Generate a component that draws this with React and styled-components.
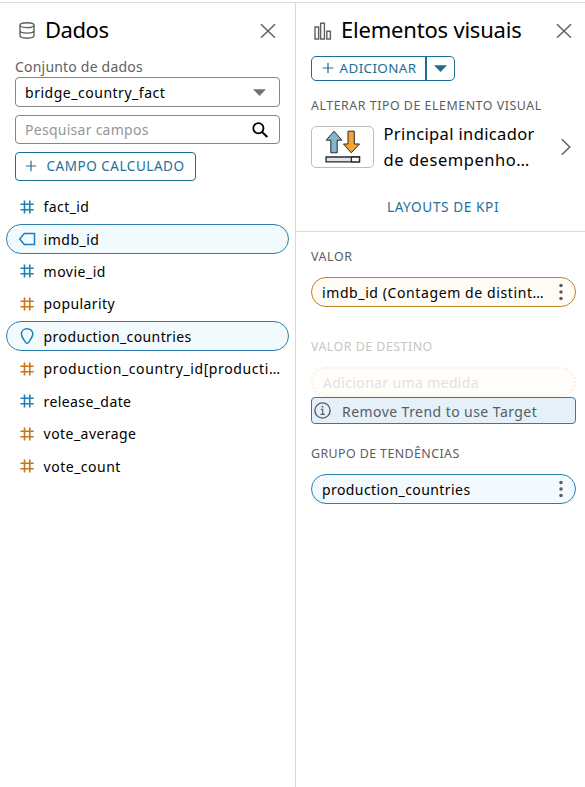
import React from "react";
import styled, { createGlobalStyle } from "styled-components";

const Global = createGlobalStyle`
  * { box-sizing: border-box; }
  body { margin: 0; background: #fff; font-family: "Noto Sans", "Open Sans", sans-serif; color: #000; }
  svg { display: block; flex: none; }
  button, input { font: inherit; color: inherit; }
`;

const Page = styled.div`
  width: 585px; height: 787px; padding-top: 2px; overflow: hidden;
`;
const Columns = styled.div`
  display: grid; grid-template-columns: 296px 289px; height: 785px;
  border-top: 1px solid #dcdcdc;
`;
const DataPanel = styled.section`
  border-right: 1px solid #d9d9d9; padding: 0 15px; min-width: 0;
`;
const VisualPanel = styled.section`min-width: 0;`;
const Text = styled.span`
  font-size: ${(p) => p.$size || 14}px;
  letter-spacing: ${(p) => p.$ls || 0}px;
  white-space: nowrap;
`;
const PanelHeader = styled.header`
  display: flex; align-items: center; height: 55px;
  padding: ${(p) => p.$pad};
`;
const Title = styled.h1`
  margin: 0 auto 0 ${(p) => p.$gap}px; font-weight: 400; font-size: 22px; line-height: 30px;
  letter-spacing: ${(p) => p.$ls}px; white-space: nowrap; padding-bottom: 3px;
`;
const IconButton = styled.button`
  display: flex; border: 0; padding: 0; background: none;
`;
const FieldCaption = styled.label`
  display: block; height: 19px; line-height: 18px; color: #626262; white-space: nowrap;
  font-size: 14px; letter-spacing: ${(p) => p.$ls}px;
`;
const Box = styled.div`
  display: flex; align-items: center; justify-content: space-between;
  width: 265px; height: ${(p) => p.$h}px; margin-bottom: ${(p) => p.$mb}px;
  border: 1px solid #858585; border-radius: 4px; padding: 0 ${(p) => p.$right}px 0 9px;
`;
const SearchInput = styled.input`
  width: 200px; border: 0; padding: 0; outline: 0; background: none; font-size: 14px;
  letter-spacing: ${(p) => p.$ls}px;
  &::placeholder { color: #969696; opacity: 1; }
`;
const OutlineButton = styled.button`
  display: flex; align-items: center; gap: 9.5px; width: 181px; height: 29px;
  border: 1px solid #1d6d92; border-radius: 4px; background: #fff; color: #24709a;
  padding: 0 0 1px 9px;
`;
const FieldList = styled.ul`
  list-style: none; margin: 10.6px -9px 0; padding: 0; width: 283px;
`;
const FieldRow = styled.li`
  display: flex; align-items: center; gap: 7.6px; height: 30px; margin-bottom: 2.45px;
  padding: 0 0 0 11px; border: 1px solid ${(p) => (p.$on ? "#2a7fae" : "transparent")};
  border-radius: 15px; background: ${(p) => (p.$on ? "#f2fafe" : "transparent")};
  color: ${(p) => (p.$measure ? "#c77717" : "#1f80b8")};
`;
const FieldName = styled(Text)`
  color: #000; line-height: 20px; padding-top: 1px;
`;
const Inset = styled.div`padding-left: 15px; width: 280px;`;
const SplitButton = styled.div`
  display: flex; width: 144px; height: 25px; margin-top: -2px; border: 1px solid #1d6d92; border-radius: 5px;
  color: #1d6d92;
`;
const SplitMain = styled.button`
  display: flex; align-items: center; gap: 5.5px; width: 115px; border: 0;
  border-right: 2px solid #1d6d92; background: none; padding: 0 0 1px 10px;
`;
const SplitArrow = styled.button`
  display: flex; align-items: center; justify-content: center; flex: 1; border: 0; padding: 0; background: none;
`;
const SectionLabel = styled.div`
  height: 18px; line-height: 18px; margin-top: ${(p) => p.$mt}px; margin-bottom: ${(p) => p.$mb}px;
  font-size: 12.4px; letter-spacing: ${(p) => p.$ls}px; white-space: nowrap;
  color: ${(p) => (p.$muted ? "#c6c6c6" : "#5d5d5d")};
`;
const TypePicker = styled.div`
  display: flex; align-items: center; height: 52px;
`;
const Thumb = styled.div`
  display: flex; align-items: center; justify-content: center; width: 63px; height: 42px; flex: none;
  border: 1px solid #bdbdbd; border-radius: 5px;
`;
const TypeName = styled.div`
  display: flex; flex-direction: column; margin-left: 9.5px; width: 177px; line-height: 26px;
`;
const LayoutLink = styled.div`
  display: flex; justify-content: center; align-items: center; height: 48px; margin-top: 11px;
  padding: 0 0 3px 5px; color: #24709a; border-bottom: 1px solid #dadada;
`;
const Pill = styled.div`
  display: flex; align-items: center; justify-content: space-between; width: 265px; height: 30px;
  border: 1px solid ${(p) => (p.$measure ? "#bd8228" : "#2a7fae")}; border-radius: 15px;
  background: ${(p) => (p.$measure ? "#fffcf6" : "#f3fafd")}; padding: 0 12px 0 10px;
`;
const EmptyPill = styled.div`
  display: flex; align-items: center; width: 265px; height: 30px; padding-left: 10px;
  border: 2px dotted #f9efe2; border-radius: 15px; background: #fffefb; color: #e2e2e2;
`;
const Notice = styled.div`
  display: flex; align-items: center; gap: 11.5px; width: 265px; height: 27px; padding-left: 1.5px;
  border: 1px solid #2a7cae; border-radius: 4px; background: #e5f0f9; color: #565d63;
`;
const NoticeText = styled(Text)`padding-top: 2px;`;
const NoticeIcon = styled.span`padding-bottom: 1px;`;

const Close = () => (
  <svg width="16" height="16" viewBox="0 0 16 16" stroke="#606060" strokeWidth="1.5"><path d="M1 1.2 15 14.8M15 1.2 1 14.8" /></svg>
);
const Plus = () => (
  <svg width="12" height="12" viewBox="0 0 12 12" stroke="currentColor" strokeWidth="1.2"><path d="M6 .8V11.2M.8 6H11.2" /></svg>
);
const Caret = ({ color }) => (
  <svg width="13" height="7" viewBox="0 0 13 7"><path d="M0 .2H13L6.5 7Z" fill={color} /></svg>
);
const Database = () => (
  <svg width="16" height="17" viewBox="0 0 16 17" fill="none" stroke="#606060" strokeWidth="1.4">
    <ellipse cx="8" cy="3.2" rx="7" ry="2.4" />
    <path d="M1 3.2v10.4c0 1.5 3 2.6 7 2.6s7-1.1 7-2.6V3.2M1 8.5c0 1.5 3 2.6 7 2.6s7-1.1 7-2.6" />
  </svg>
);
const Bars = () => (
  <svg width="18" height="18" viewBox="0 0 18 18" fill="none" stroke="#606060" strokeWidth="1.4">
    <path d="M1 5h3.6v12H1zM6.6 1.2h3.8V17H6.6zM12.8 9.2h3.6V17h-3.6z" />
  </svg>
);
const Search = () => (
  <svg width="16" height="16" viewBox="0 0 16 16" fill="none" stroke="#000" strokeWidth="1.8">
    <circle cx="6.4" cy="6.2" r="5.1" /><path d="m10 10 5.3 5" strokeWidth="2.1" />
  </svg>
);
const icons = {
  hash: <path d="M5.6 1.4v13M10.9 1.4v13M1.6 5.2h13.2M1.6 10.7h13.2" strokeWidth="1.6" />,
  tag: <path d="M.8 8 5.4 2.6H15.6V13.4H5.4Z" strokeWidth="1.5" />,
  pin: <path d="M8.2.8C4.8.8 2.5 3 2.5 6c0 3.1 2.5 5.5 3.9 8 .8 1.5 2.8 1.5 3.6 0 1.4-2.5 3.9-4.9 3.9-8C13.9 3 11.6.8 8.2.8Z" strokeWidth="1.5" />,
};
const FieldIcon = ({ kind }) => (
  <svg width="18" height="16" viewBox="-.9 0 18 16" fill="none" stroke="currentColor">{icons[kind]}</svg>
);
const Kpi = () => (
  <svg width="36" height="34" viewBox="0 0 36 34" stroke="#25282b" strokeWidth="1">
    <path d="M9 1.2 16.8 10.2H12.2V22.8H5.8V10.2H1.2Z" fill="#83b5ce" />
    <path d="M23 1.2H29.3V14H34.5L26.2 22.8 18.5 14H23Z" fill="#f5a436" />
    <path d="M1 27H34.5V31.8H1Z" fill="#e2e3ec" strokeWidth="1.3" />
    <path d="M26.4 27H34.5V31.8H26.4Z" fill="#fff" strokeWidth="1.3" />
  </svg>
);
const Chevron = () => (
  <svg width="10" height="18" viewBox="0 0 10 18" fill="none" stroke="#606060" strokeWidth="1.5"><path d="m.8 1.2 8 7.8-8 7.8" /></svg>
);
const Dots = () => (
  <svg width="4" height="18" viewBox="0 0 4 18" fill="#5d5d5d"><circle cx="2" cy="2.5" r="1.75" /><circle cx="2" cy="9" r="1.75" /><circle cx="2" cy="15.5" r="1.75" /></svg>
);
const Info = () => (
  <svg width="17" height="17" viewBox="0 0 17 17" fill="none" stroke="#565d63" strokeWidth="1.4">
    <circle cx="8.5" cy="8.5" r="7.6" /><path d="M6.8 7.3h1.9v5M6.5 12.4h4.3" strokeWidth="1.2" /><circle cx="8.5" cy="4.7" r=".9" fill="#565d63" stroke="none" />
  </svg>
);

const fields = [
  { name: "fact_id", kind: "hash" },
  { name: "imdb_id", kind: "tag", on: true, ls: 0.5 },
  { name: "movie_id", kind: "hash", ls: 0.5 },
  { name: "popularity", kind: "hash", measure: true, ls: 0.4 },
  { name: "production_countries", kind: "pin", on: true },
  { name: "production_country_id[producti…", kind: "hash", measure: true, ls: 0.6 },
  { name: "release_date", kind: "hash" },
  { name: "vote_average", kind: "hash", measure: true, ls: 0.45 },
  { name: "vote_count", kind: "hash", measure: true, ls: 0.5 },
];

export default function App() {
  return (
    <Page>
      <Global />
      <Columns>
        <DataPanel>
          <PanelHeader $pad="0 4px 0 4px">
            <Database />
            <Title $gap={10} $ls={-0.45}>Dados</Title>
            <IconButton aria-label="Fechar"><Close /></IconButton>
          </PanelHeader>
          <FieldCaption $ls={0.2}>Conjunto de dados</FieldCaption>
          <Box $h={30} $mb={8} $right={13}>
            <Text $ls={0.52}>bridge_country_fact</Text>
            <Caret color="#737373" />
          </Box>
          <Box $h={29} $mb={8} $right={11}>
            <SearchInput $ls={0.27} placeholder="Pesquisar campos" />
            <Search />
          </Box>
          <OutlineButton>
            <Plus />
            <Text $size={13.5} $ls={0.53}>CAMPO CALCULADO</Text>
          </OutlineButton>
          <FieldList>
            {fields.map((f) => (
              <FieldRow key={f.name} $on={f.on} $measure={f.measure}>
                <FieldIcon kind={f.kind} />
                <FieldName $ls={f.ls || 0.4}>{f.name}</FieldName>
              </FieldRow>
            ))}
          </FieldList>
        </DataPanel>
        <VisualPanel>
          <PanelHeader $pad="0 13px 0 18px">
            <Bars />
            <Title $gap={9} $ls={-0.2}>Elementos visuais</Title>
            <IconButton aria-label="Fechar"><Close /></IconButton>
          </PanelHeader>
          <Inset>
            <SplitButton>
              <SplitMain><Plus /><Text $size={13.4} $ls={0.4}>ADICIONAR</Text></SplitMain>
              <SplitArrow aria-label="Mais opções"><Caret color="#1d6d92" /></SplitArrow>
            </SplitButton>
            <SectionLabel $mt={16} $mb={6} $ls={0.53}>ALTERAR TIPO DE ELEMENTO VISUAL</SectionLabel>
            <TypePicker>
              <Thumb><Kpi /></Thumb>
              <TypeName>
                <Text $size={16.5} $ls={0.36}>Principal indicador</Text>
                <Text $size={16.5} $ls={0.55}>de desempenho…</Text>
              </TypeName>
              <Chevron />
            </TypePicker>
          </Inset>
          <LayoutLink><Text $size={13.6} $ls={0.6}>LAYOUTS DE KPI</Text></LayoutLink>
          <Inset>
            <SectionLabel $mt={16} $mb={11} $ls={0.6}>VALOR</SectionLabel>
            <Pill $measure><Text $ls={0.6}>imdb_id (Contagem de distint…</Text><Dots /></Pill>
            <SectionLabel $mt={31} $mb={11} $ls={0.5} $muted>VALOR DE DESTINO</SectionLabel>
            <EmptyPill><Text $ls={0.36}>Adicionar uma medida</Text></EmptyPill>
            <Notice><NoticeIcon><Info /></NoticeIcon><NoticeText $ls={0.44}>Remove Trend to use Target</NoticeText></Notice>
            <SectionLabel $mt={21} $mb={11} $ls={0.42}>GRUPO DE TENDÊNCIAS</SectionLabel>
            <Pill><Text $ls={0.42}>production_countries</Text><Dots /></Pill>
          </Inset>
        </VisualPanel>
      </Columns>
    </Page>
  );
}
